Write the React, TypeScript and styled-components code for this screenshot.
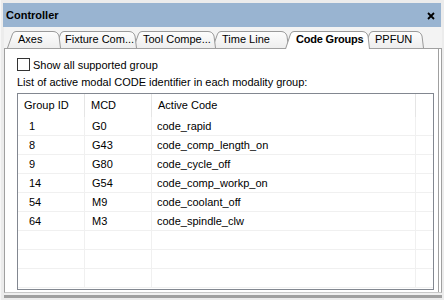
import React from "react";
import styled, { createGlobalStyle } from "styled-components";

const GlobalStyle = createGlobalStyle`
  html, body {
    margin: 0;
    padding: 0;
    background: #ececec;
  }
  body {
    font-family: "Liberation Sans", Arial, sans-serif;
    font-size: 11px;
    color: #000;
  }
`;

type TabDef = {
  label: string;
  width: number;
  offset: number;
  pad: number;
  active?: boolean;
};

const tabs: TabDef[] = [
  { label: "Axes", width: 54, offset: 0, pad: 11 },
  { label: "Fixture Com...", width: 82, offset: -6, pad: 10 },
  { label: "Tool Compe...", width: 83, offset: -4, pad: 10 },
  { label: "Time Line", width: 77, offset: -4, pad: 10 },
  { label: "Code Groups", width: 85, offset: -4, pad: 11, active: true },
  { label: "PPFUN", width: 60, offset: -6, pad: 11 }
];

const rows = [
  { id: "1", mcd: "G0", code: "code_rapid" },
  { id: "8", mcd: "G43", code: "code_comp_length_on" },
  { id: "9", mcd: "G80", code: "code_cycle_off" },
  { id: "14", mcd: "G54", code: "code_comp_workp_on" },
  { id: "54", mcd: "M9", code: "code_coolant_off" },
  { id: "64", mcd: "M3", code: "code_spindle_clw" },
  { id: "", mcd: "", code: "" },
  { id: "", mcd: "", code: "" },
  { id: "", mcd: "", code: "" }
];

const Window = styled.div`
  width: 444px;
  height: 300px;
  box-sizing: border-box;
  padding: 3px 3px 0 3px;
  display: flex;
  flex-direction: column;
  background: #ececec;
  border-left: 1px solid #f7f7f7;
`;

const TitleBar = styled.div`
  height: 24px;
  flex: none;
  background: #99b4d1;
  display: flex;
  align-items: center;
  justify-content: space-between;
  padding: 0 6px 0 3px;
  font-weight: bold;
  margin-left: -1px;
`;

const CloseButton = styled.span`
  display: flex;
  align-items: center;
  margin-top: 1px;
`;

const TabStrip = styled.div`
  height: 21px;
  flex: none;
  box-sizing: border-box;
  background: #f3f3f3;
  display: flex;
  align-items: flex-end;
  padding-left: 3px;
  position: relative;
  z-index: 2;
  margin-right: -1px;
`;

const Tab = styled.div<{ $width: number; $offset: number; $z: number; $active?: boolean; $pad: number }>`
  position: relative;
  flex: none;
  width: ${(p) => p.$width}px;
  height: ${(p) => (p.$active ? 18 : 17)}px;
  margin-left: ${(p) => p.$offset}px;
  margin-bottom: ${(p) => (p.$active ? -1 : 0)}px;
  z-index: ${(p) => p.$z};
  box-sizing: border-box;
  padding-left: ${(p) => p.$pad}px;
  padding-top: 2px;
  font-weight: ${(p) => (p.$active ? "bold" : "normal")};
  letter-spacing: ${(p) => (p.$active ? "-0.2px" : "0")};
  white-space: nowrap;
`;

const TabShape = styled.svg`
  position: absolute;
  left: 0;
  top: 0;
`;

const TabLabel = styled.span`
  position: relative;
`;

const Panel = styled.div`
  flex: 1;
  background: #fff;
  border: 1px solid #a0a0a0;
  border-bottom-color: #c8c8c8;
  box-shadow: inset -2px 0 0 #fff, inset -3px 0 0 #a0a0a0,
    0 2px 0 #f0f0f0, 0 5px 0 #a0a0a0;
  padding: 9px 0 0 12px;
  margin-bottom: 7px;
  margin-right: -1px;
  display: flex;
  flex-direction: column;
`;

const CheckRow = styled.label`
  display: flex;
  align-items: center;
  gap: 3px;
  height: 13px;
`;

const CheckBox = styled.span`
  width: 13px;
  height: 13px;
  box-sizing: border-box;
  border: 1px solid #333;
  background: #fff;
`;

const Caption = styled.div`
  margin-top: 4px;
  height: 14px;
  line-height: 14px;
`;

const ListBox = styled.div`
  margin-top: 4px;
  width: 417px;
  height: 197px;
  box-sizing: border-box;
  border: 1px solid #828790;
  overflow: hidden;
`;

const Grid = styled.div`
  display: grid;
  grid-template-columns: 67px 67px 264px 1fr;
`;

const HeadCell = styled.div<{ $last?: boolean }>`
  height: 23px;
  line-height: 23px;
  padding-left: ${(p) => (p.$last ? 0 : 6)}px;
  border-right: ${(p) => (p.$last ? "none" : "1px solid #e5e5e5")};
  white-space: nowrap;
`;

const Cell = styled.div<{ $pad: number; $last?: boolean }>`
  height: 18px;
  line-height: 19px;
  padding-left: ${(p) => p.$pad}px;
  border-bottom: 1px solid #f0f0f0;
  border-right: ${(p) => (p.$last ? "none" : "1px solid #f0f0f0")};
  white-space: nowrap;
`;

const App: React.FC = () => {
  return (
    <>
      <GlobalStyle />
      <Window>
        <TitleBar>
          <span>Controller</span>
          <CloseButton>
            <svg width="8" height="8" viewBox="0 0 8 8">
              <path d="M1 1 L7 7 M7 1 L1 7" stroke="#000" strokeWidth="1.8" />
            </svg>
          </CloseButton>
        </TitleBar>
        <TabStrip>
          {tabs.map((t, i) => {
            const h = t.active ? 18 : 17;
            const w = t.width;
            const d = `M0.5 ${h} L5.5 3 Q6.5 0.5 9 0.5 L${w - 8} 0.5 Q${w - 3.5} 0.5 ${w - 2} 5 L${w - 0.5} ${h}`;
            return (
              <Tab
                key={t.label}
                $width={w}
                $offset={t.offset}
                $pad={t.pad}
                $z={t.active ? 20 : 10 - i}
                $active={t.active}
              >
                <TabShape width={w} height={h}>
                  <defs>
                    <linearGradient id={`tg${i}`} x1="0" y1="0" x2="0" y2="1">
                      <stop offset="0" stopColor="#fdfdfd" />
                      <stop offset="1" stopColor="#eeeeee" />
                    </linearGradient>
                  </defs>
                  <path
                    d={d}
                    fill={t.active ? "#fff" : `url(#tg${i})`}
                    stroke="#9a9a9a"
                    strokeWidth="1"
                  />
                </TabShape>
                <TabLabel>{t.label}</TabLabel>
              </Tab>
            );
          })}
        </TabStrip>
        <Panel>
          <CheckRow>
            <CheckBox />
            <span>Show all supported group</span>
          </CheckRow>
          <Caption>List of active modal CODE identifier in each modality group:</Caption>
          <ListBox>
            <Grid>
              <HeadCell>Group ID</HeadCell>
              <HeadCell>MCD</HeadCell>
              <HeadCell>Active Code</HeadCell>
              <HeadCell $last />
              {rows.map((r, i) => (
                <React.Fragment key={i}>
                  <Cell $pad={11}>{r.id}</Cell>
                  <Cell $pad={7}>{r.mcd}</Cell>
                  <Cell $pad={5}>{r.code}</Cell>
                  <Cell $pad={0} $last />
                </React.Fragment>
              ))}
            </Grid>
          </ListBox>
        </Panel>
      </Window>
    </>
  );
};

export default App;
